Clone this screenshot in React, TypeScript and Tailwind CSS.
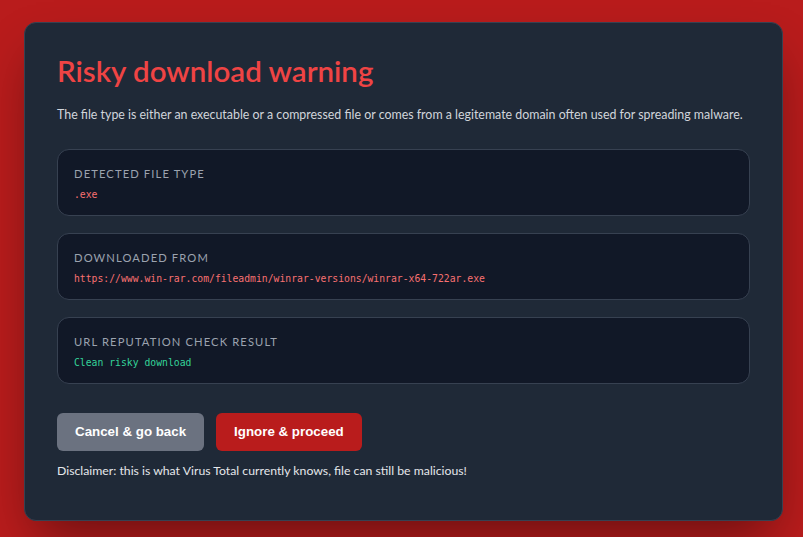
import React from "react";

const sans = { fontFamily: 'Lato, "Noto Sans", sans-serif' };

function InfoBox({ label, value, tone }: { label: string; value: string; tone: "red" | "green" }) {
  return (
    <div className="rounded-xl border border-[#374151] bg-[#111827] p-4">
      <div className="mb-[8px] text-[11.2px] uppercase leading-4 tracking-[0.1em] text-[#9ca3af]">{label}</div>
      <div
        className={`text-[9.75px] leading-[9px] ${tone === "red" ? "text-[#f87171]" : "text-[#34d399]"}`}
        style={{ fontFamily: '"DejaVu Sans Mono", monospace' }}
      >
        {value}
      </div>
    </div>
  );
}

export default function App() {
  return (
    <div className="min-h-[537px] w-[803px] bg-[#b91c1c] pl-6 pt-[22px]" style={sans}>
      <div className="w-[759px] rounded-xl border border-[#374151] bg-[#1f2937] px-8 pb-[41px] pt-8 shadow-[0_25px_50px_-12px_rgba(0,0,0,0.45)]">
        <h1 className="mb-[18px] text-[29.5px] leading-[32px] font-semibold text-[#ef4444]">Risky download warning</h1>
        <p className="mb-6 whitespace-nowrap text-[12.4px] leading-5 text-[#d1d5db]">
          The file type is either an executable or a compressed file or comes from a legitemate domain often used for spreading malware.
        </p>
        <div className="flex flex-col gap-[17px]">
          <InfoBox label="Detected file type" value=".exe" tone="red" />
          <InfoBox
            label="Downloaded from"
            value="https://www.win-rar.com/fileadmin/winrar-versions/winrar-x64-722ar.exe"
            tone="red"
          />
          <InfoBox label="URL reputation check result" value="Clean risky download" tone="green" />
        </div>
        <div className="mt-[29px] flex gap-3" style={{ fontFamily: '"Liberation Sans", Arial, sans-serif' }}>
          <button className="h-[38px] rounded-md bg-[#6b7280] px-[18px] text-[13.333px] font-bold text-white">
            Cancel &amp; go back
          </button>
          <button className="h-[38px] rounded-md bg-[#b91c1c] px-[18px] text-[13.333px] font-bold text-white">
            Ignore &amp; proceed
          </button>
        </div>
        <p className="mt-3 text-[12.25px] leading-4 text-[#e5e7eb]">
          Disclaimer: this is what Virus Total currently knows, file can still be malicious!
        </p>
      </div>
    </div>
  );
}
